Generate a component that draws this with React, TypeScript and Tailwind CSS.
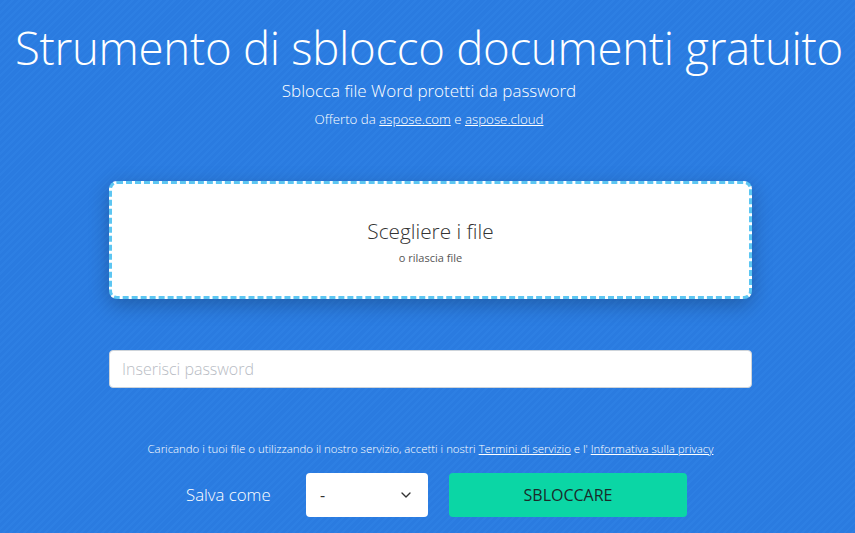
import { ChevronDown } from 'lucide-react';

export default function App() {
  return (
    <div className="h-[533px] w-full overflow-hidden bg-[#2a7be0] bg-[repeating-linear-gradient(135deg,#2a7be0_0px,#2a7be0_3px,#2d7fe3_3px,#2d7fe3_5px)] font-['Open_Sans',sans-serif] text-white">
      {/* header */}
      <div className="flex flex-col items-center pl-[3px] pt-[17px]">
        <h1 className="text-[45.6px] font-light leading-[60px] tracking-[-0.3px]">Strumento di sblocco documenti gratuito</h1>
        <p className="mt-[2px] text-[17px] font-light leading-[24px]">Sblocca file Word protetti da password</p>
        <p className="mt-[7px] text-[13.3px] font-light leading-[18px]">
          Offerto da <a className="underline">aspose.com</a> e <a className="underline">aspose.cloud</a>
        </p>
      </div>

      <div className="ml-[109px] w-[643px]">
        {/* drop zone */}
        <div className="mt-[53px] flex h-[118px] flex-col items-center rounded-[8px] border-[3px] border-dashed border-[#5cc6f2] bg-white pt-[34px] shadow-[0_6px_20px_rgba(0,0,0,0.25)]">
          <div className="text-[20.8px] font-light leading-[26px] text-[#333]">Scegliere i file</div>
          <div className="mt-[7px] text-[11px] leading-[14px] text-[#555]">o rilascia file</div>
        </div>

        {/* password */}
        <input
          type="password"
          placeholder="Inserisci password"
          className="mt-[51px] block h-[38px] w-full rounded-[4px] border border-[#ced4da] bg-white px-[12px] text-[16px] font-light text-[#333] outline-none placeholder:text-[#b8bcc4]"
        />

        {/* terms */}
        <p className="mt-[53px] text-center text-[11.4px] font-light leading-[16px]">
          Caricando i tuoi file o utilizzando il nostro servizio, accetti i nostri <a className="underline">Termini di servizio</a> e l' <a className="underline">Informativa sulla privacy</a>
        </p>

        {/* save row */}
        <div className="mt-[16px] flex items-center">
          <span className="ml-[77px] w-[120px] text-[16.8px] font-light">Salva come</span>
          <div className="flex h-[44px] w-[122px] items-center justify-between rounded-[4px] bg-white pl-[14px] pr-[14px] text-[#333]">
            <span className="text-[16px]">-</span>
            <ChevronDown size={16} strokeWidth={2} className="text-[#333]" />
          </div>
          <button className="ml-[21px] h-[44px] w-[238px] rounded-[4px] bg-[#0bd6a5] text-[16px] text-[#1a2b2a]">SBLOCCARE</button>
        </div>
      </div>
    </div>
  );
}
